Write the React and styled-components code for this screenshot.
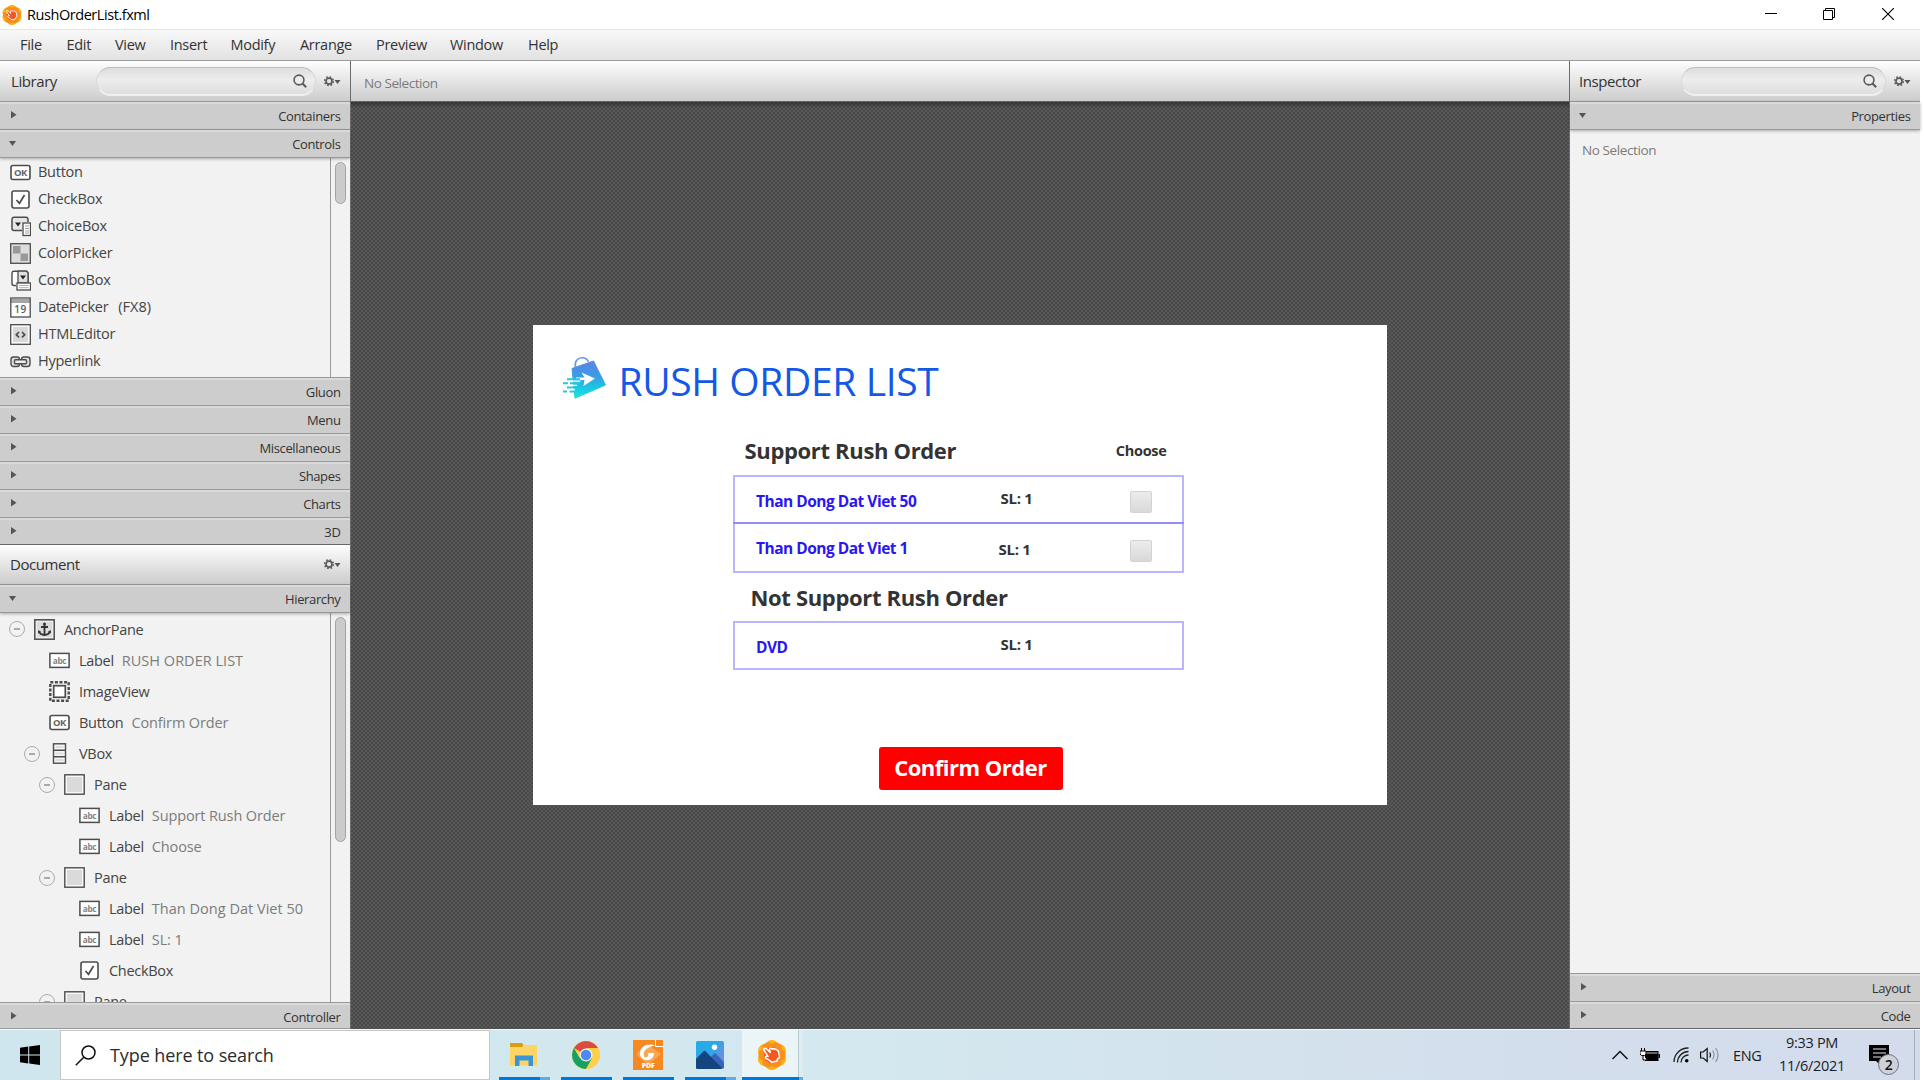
import React from "react";
import styled, { createGlobalStyle, css } from "styled-components";

const Global = createGlobalStyle`
  * { box-sizing: border-box; }
  body { margin: 0; background: #fff; overflow: hidden; }
  #root { font-family: "Open Sans", "Noto Sans", sans-serif; color: #333; }
  svg { display: block; flex: none; }
`;

const Screen = styled.div`
  width: 1920px;
  height: 1080px;
  display: flex;
  flex-direction: column;
  white-space: nowrap;
  font-size: 14.5px;
  letter-spacing: -0.3px;
`;

/* ---------- window chrome ---------- */
const TitleBar = styled.header`
  height: 29px;
  flex: none;
  display: flex;
  align-items: center;
  background: #fff;
  color: #000;
  padding-left: 2px;
`;
const FileName = styled.span`
  flex: 1;
  margin-left: 5px;
  letter-spacing: -0.44px;
`;
const WindowButton = styled.div`
  width: 58.5px;
  height: 29px;
  padding-bottom: 1px;
  display: flex;
  align-items: center;
  justify-content: center;
`;
const MenuBar = styled.nav`
  height: 32px;
  flex: none;
  display: flex;
  padding-left: 20px;
  border-top: 1px solid #e8e8e8;
  border-bottom: 1px solid #9b9b9b;
  background: linear-gradient(#f8f8f8, #e2e2e2);
`;
const MenuItem = styled.div`
  width: ${(p) => p.$width}px;
  line-height: 30px;
`;
const Workspace = styled.main`
  height: 968px;
  flex: none;
  display: flex;
`;

/* ---------- side panels ---------- */
const Side = styled.aside`
  width: 350px;
  height: 968px;
  flex: none;
  display: flex;
  flex-direction: column;
  background: #f2f2f2;
`;
const PanelHeader = styled.div`
  height: ${(p) => p.$height || 41}px;
  flex: none;
  display: flex;
  align-items: center;
  padding: 0 9px 0 ${(p) => p.$indent || 11}px;
  border-bottom: 1px solid #999;
  background: linear-gradient(#fefefe, #cccccc);
  font-size: 15px;
  letter-spacing: -0.42px;
`;
const PanelName = styled.span`
  width: ${(p) => p.$width}px;
  padding-bottom: ${(p) => p.$lift || 0}px;
`;
const SearchField = styled.div`
  width: ${(p) => p.$width}px;
  height: 29px;
  margin-right: 8px;
  padding-right: 8px;
  display: flex;
  align-items: center;
  justify-content: flex-end;
  border-radius: 15px;
  border: 1px solid #dadada;
  border-top-color: #bdbdbd;
  border-bottom: 2px solid #f0f0f0;
  background: linear-gradient(#dedede, #ededed 45%, #dedede);
`;
const Section = styled.div`
  height: ${(p) => p.$height || 28}px;
  flex: none;
  display: flex;
  align-items: flex-start;
  justify-content: space-between;
  padding: 0 9.5px 0 9px;
  background: #cdcdcd;
  border-top: 2px solid #dadada;
  border-bottom: 1px solid ${(p) => (p.$dark ? "#686868" : "#999")};
  font-size: 13px;
  letter-spacing: -0.36px;
  line-height: 25px;
  ${(p) => p.$open && css`box-shadow: 0 1px 3px rgba(0, 0, 0, 0.3); z-index: 1;`}
`;
const ArrowSlot = styled.span`
  padding-top: 7px;
`;
const ListArea = styled.div`
  height: ${(p) => p.$height}px;
  flex: none;
  display: flex;
  overflow: hidden;
  border-bottom: 1px solid #999;
`;
const ListBody = styled.div`
  width: 331px;
  flex: none;
  padding-top: 1px;
  border-right: 1px solid #999;
`;
const ScrollTrack = styled.div`
  flex: 1;
  padding: 4px 0 0 4px;
`;
const ScrollThumb = styled.div`
  width: 11px;
  height: ${(p) => p.$height}px;
  border: 1px solid #a3a3a3;
  border-radius: 5.5px;
  background: #cbcbcb;
`;
const LibraryRow = styled.div`
  height: 27px;
  display: flex;
  align-items: center;
  gap: 7px;
  padding-left: 10px;
  color: #444;
  letter-spacing: -0.26px;
`;
const LibraryName = styled.span`
  padding-bottom: 3px;
`;
const LibraryNote = styled.span`
  margin-left: 3px;
  padding-bottom: 3px;
  letter-spacing: 0;
`;
const TreeRow = styled.div`
  height: ${(p) => (p.$depth ? 31 : 30)}px;
  margin-bottom: ${(p) => (p.$depth ? 0 : 1)}px;
  display: flex;
  align-items: center;
  padding-left: ${(p) => 9 + p.$depth * 15}px;
  color: #444;
`;
const Toggle = styled.span`
  width: 16px;
  height: 16px;
  flex: none;
  margin-right: 9px;
  border: ${(p) => (p.$shown ? "1px solid #ababab" : "0")};
  border-radius: 50%;
  display: flex;
  align-items: center;
  justify-content: center;
  &::after {
    content: "";
    width: ${(p) => (p.$shown ? 6 : 0)}px;
    height: 2px;
    background: #aaa;
  }
`;
const TreeName = styled.span`
  margin-left: 9px;
`;
const TreeInfo = styled.span`
  margin-left: 8px;
  color: #7c7c7c;
  letter-spacing: ${(p) => (p.$wide ? 0.02 : -0.12)}px;
`;
const InspectorBody = styled.div`
  flex: 1;
  padding: 10px 12px;
  border-bottom: 1px solid #999;
  color: #7b7b7b;
  font-size: 13.5px;
  letter-spacing: -0.4px;
  line-height: 20px;
`;

/* ---------- editor canvas ---------- */
const Editor = styled.section`
  width: 1220px;
  display: flex;
  flex-direction: column;
  border-left: 1px solid #6c6c6c;
  border-right: 1px solid #6c6c6c;
`;
const SelectionBar = styled.div`
  height: 41px;
  flex: none;
  padding: 2px 0 0 13px;
  background: linear-gradient(#fefefe, #cccccc);
  border-bottom: 1px solid #666;
  color: #7b7b7b;
  font-size: 13.5px;
  letter-spacing: -0.44px;
  line-height: 40px;
`;
const Backdrop = styled.div`
  flex: 1;
  display: flex;
  align-items: center;
  justify-content: center;
  padding: 0 1px 2px 0;
  background: linear-gradient(rgba(0, 0, 0, 0.35), transparent 6px),
    conic-gradient(#585858 25%, #494949 0 50%, #585858 0 75%, #494949 0) 0 0 / 4px 4px;
`;
const AnchorPane = styled.div`
  width: 854px;
  height: 480px;
  background: #fff;
  padding-left: 29px;
`;
const Brand = styled.div`
  height: 110px;
  display: flex;
  padding-top: 31px;
`;
const BrandTitle = styled.h1`
  margin: 1px 0 0 11px;
  font-size: 39px;
  line-height: 48px;
  font-weight: 400;
  letter-spacing: -0.38px;
  color: #1458e6;
`;
const OrderBox = styled.div`
  width: 451px;
  margin-left: 171px;
`;
const GroupHead = styled.div`
  height: ${(p) => p.$height}px;
  display: flex;
  align-items: flex-start;
  padding: ${(p) => p.$top || 0}px 17px 0 ${(p) => p.$indent}px;
  font-weight: 700;
  line-height: 31px;
`;
const GroupTitle = styled.span`
  flex: 1;
  font-size: 22px;
  letter-spacing: -0.34px;
`;
const Choose = styled.span`
  font-size: 14.5px;
`;
const OrderRow = styled.div`
  height: ${(p) => p.$height}px;
  margin-top: ${(p) => (p.$joined ? -2 : 0)}px;
  display: grid;
  grid-template-columns: 244px 130px 22px;
  align-items: start;
  padding-left: 21px;
  border: 2px solid rgba(90, 80, 250, 0.42);
  font-weight: 700;
  font-size: 15px;
  line-height: 20px;
`;
const Product = styled.span`
  margin-top: ${(p) => p.$top}px;
  padding-left: 0.5px;
  font-size: 15.5px;
  letter-spacing: -0.5px;
  color: #2a16f2;
`;
const Quantity = styled.span`
  margin-top: ${(p) => p.$top}px;
  margin-left: ${(p) => p.$shift || 0}px;
`;
const CheckBox = styled.span`
  width: 22px;
  height: 22px;
  margin-top: ${(p) => p.$top}px;
  border: 1px solid #d3d3d3;
  border-radius: 2px;
  background: linear-gradient(#ececec, #d9d9d9);
`;
const ConfirmButton = styled.button`
  display: block;
  width: 184px;
  height: 43px;
  margin: 77px 0 0 317px;
  padding: 0 0 2px;
  border: 0;
  border-radius: 3px;
  background: #fe0000;
  color: #fff;
  font: 700 22px/41px "Open Sans", sans-serif;
  letter-spacing: -0.5px;
`;

/* ---------- taskbar ---------- */
const Taskbar = styled.footer`
  height: 51px;
  flex: none;
  display: flex;
  border-top: 1px solid #f4f8fa;
  background: linear-gradient(90deg, #d0e6ee, #d3e8ef 45%, #d3deec 80%, #d4dcec);
  color: #1c1c1c;
`;
const StartButton = styled.div`
  width: 60px;
  padding: 15px 0 0 20px;
`;
const TaskSearch = styled.div`
  width: 430px;
  display: flex;
  align-items: center;
  gap: 14px;
  padding-left: 14px;
  border: 1px solid #c7c7c7;
  background: #fff;
  font-size: 18px;
  letter-spacing: -0.1px;
  color: #2b2b2b;
`;
const Apps = styled.div`
  flex: 1;
  display: flex;
  gap: 11px;
  padding-left: 9px;
`;
const TaskApp = styled.div`
  width: 51px;
  display: flex;
  flex-direction: column;
  justify-content: space-between;
  padding-top: 10px;
  ${(p) =>
    p.$active &&
    css`
      width: 61px;
      margin-left: -5px;
      background: linear-gradient(90deg, #ebf4f7 56px, #b5c9d2 56px 57px, #dfedf3 57px);
    `}
`;
const AppIcon = styled.div`
  padding-left: ${(p) => (p.$active ? 15 : 10)}px;
`;
const Underline = styled.div`
  height: 3px;
  background: ${(p) =>
    p.$stack ? `linear-gradient(90deg, #0078d7 ${p.$stack}px, #66abe0 ${p.$stack}px)` : "#0078d7"};
`;
const Tray = styled.div`
  width: 308px;
  display: flex;
  align-items: center;
`;
const TraySlot = styled.div`
  width: ${(p) => p.$width}px;
  flex: none;
`;
const Clock = styled.div`
  width: 76px;
  text-align: center;
  line-height: 23px;
  padding-bottom: 3px;
`;
const Notice = styled.div`
  width: 64px;
  display: flex;
  justify-content: center;
  padding: 9px 0 0 4px;
`;
const DesktopPeek = styled.div`
  width: 6px;
  height: 50px;
  border-left: 1px solid #a5afba;
`;

/* ---------- icons ---------- */
const ink = "#4c4c4c";
const glyphs = {
  button: (
    <>
      <rect x="1" y="3.5" width="19" height="14" rx="2" fill="#fff" stroke={ink} strokeWidth="1.6" />
      <text x="10.5" y="14" textAnchor="middle" fontSize="9.500" fontWeight="700" letterSpacing="-.5" fill="#666">OK</text>
    </>
  ),
  check: (
    <>
      <rect x="2" y="2" width="17" height="17" rx="2" fill="#fff" stroke={ink} strokeWidth="1.6" />
      <path d="M6.500 11l3 3.300L14.500 6" fill="none" stroke={ink} strokeWidth="1.700" />
    </>
  ),
  choice: (
    <>
      <path d="M12 14.500H4A2 2 0 012 12.500V3A2 2 0 014 1.200H16A2 2 0 0118 3V6" fill="#e6e6e6" stroke={ink} strokeWidth="1.500" />
      <path d="M5 6.500h6l-3 4z" fill="#222" />
      <rect x="13" y="7" width="7.500" height="12.500" fill="#fff" stroke={ink} strokeWidth="1.300" />
      <path d="M15 10h4M15 12.500h4M15 15h4M15 17h4" stroke="#888" strokeWidth=".8" />
    </>
  ),
  color: (
    <>
      <rect x=".7" y=".7" width="19.600" height="19.600" fill="#dcdcdc" stroke={ink} strokeWidth="1.300" />
      <path d="M3 3h7.500v7.500H3zM10.500 10.500H18V18h-7.500z" fill="#999" />
    </>
  ),
  combo: (
    <>
      <path d="M6 15.500H4A2 2 0 012 13.500V3A2 2 0 014 1.200H16A2 2 0 0118 3V13" fill="#fff" stroke={ink} strokeWidth="1.400" />
      <path d="M8 1.200V13h10V3l-1.500-1.800z" fill="#e0e0e0" stroke={ink} strokeWidth="1.300" />
      <path d="M10 5.500h6l-3 4z" fill="#222" />
      <rect x="7" y="13" width="13.500" height="7" fill="#fff" stroke={ink} strokeWidth="1.300" />
      <path d="M9 15.500h9.500M9 17.700h9.500" stroke="#999" strokeWidth=".8" />
    </>
  ),
  date: (
    <>
      <rect x=".8" y="1" width="19.400" height="19" fill="#fff" stroke={ink} strokeWidth="1.300" />
      <path d="M1 3h19M1 5h19" stroke={ink} strokeWidth="1.200" />
      <text x="10.500" y="15.700" textAnchor="middle" fontSize="10" fontWeight="600" letterSpacing=".6" fill="#5c5c5c">19</text>
    </>
  ),
  html: (
    <>
      <rect x=".7" y=".7" width="19.600" height="19.600" fill="#fafafa" stroke={ink} strokeWidth="1.300" />
      <rect x="3" y="3" width="15" height="15" fill="#d8d8d8" />
      <path d="M9 8l-2.700 2.700L9 13.300M12 8l2.700 2.700L12 13.300" fill="none" stroke={ink} strokeWidth="1.700" />
    </>
  ),
  link: (
    <g fill="none" stroke={ink} strokeWidth="1.400">
      <rect x="1" y="6" width="8.500" height="9.500" rx="2.500" fill="#ddd" />
      <rect x="11.500" y="6" width="8.500" height="9.500" rx="2.500" fill="#ddd" />
      <rect x="4.500" y="8.700" width="12" height="4" rx="1" fill="#eee" />
    </g>
  ),
  anchor: (
    <>
      <rect x=".8" y=".8" width="19.400" height="19.400" fill="#eee" stroke={ink} strokeWidth="1.500" />
      <rect x="3" y="3" width="15" height="15" fill="#dcdcdc" />
      <path d="M10.500 5.500V16M7 8h7M5 12.300c.8 2.600 2.800 3.700 5.500 3.700s4.700-1.100 5.500-3.700" fill="none" stroke="#333" strokeWidth="1.800" />
      <circle cx="10.500" cy="4.900" r="1.500" fill="#333" />
      <path d="M4 14.300l.4-3.300 2.800 2zM17 14.300l-.4-3.300-2.800 2z" fill="#333" />
    </>
  ),
  label: (
    <>
      <rect x=".9" y="3.400" width="19.200" height="14" fill="#fff" stroke={ink} strokeWidth="1.500" />
      <text x="10.500" y="13.500" textAnchor="middle" fontSize="8.300" fontWeight="700" letterSpacing="-.3" fill="#858585">abc</text>
    </>
  ),
  image: (
    <>
      <rect x="1.300" y="1.300" width="18.400" height="18.400" fill="#f2f2f2" stroke={ink} strokeWidth="2.400" strokeDasharray="3 1.600" />
      <rect x="4.700" y="4.700" width="11.600" height="11.600" fill="#fff" stroke={ink} strokeWidth="1.700" />
    </>
  ),
  vbox: (
    <>
      <rect x="4.500" y=".8" width="12" height="19.400" fill="#f4f4f4" stroke={ink} strokeWidth="1.400" />
      <path d="M4 7.300h13M4 13.700h13" stroke={ink} strokeWidth="1.400" />
      <path d="M6.500 4h8M6.500 10.500h8M6.500 17h8" stroke="#ddd" strokeWidth="2" />
    </>
  ),
  pane: (
    <>
      <rect x=".8" y=".8" width="19.400" height="19.400" fill="#f8f8f8" stroke={ink} strokeWidth="1.400" />
      <rect x="3" y="3" width="15" height="15" fill="#dadada" />
    </>
  ),
};
const Glyph = ({ name }) => (
  <svg width="21" height="21" viewBox="0 0 21 21">{glyphs[name]}</svg>
);
const Arrow = ({ open }) => (
  <svg width="9" height="9" viewBox="0 0 9 9">
    <path d={open ? "M0 2h7L3.500 7z" : "M2 0v7.500L7.500 3.700z"} fill="#555" />
  </svg>
);
const Lens = () => (
  <svg width="14" height="14" viewBox="0 0 14 14" fill="none" stroke="#5a5a5a" strokeWidth="1.600">
    <circle cx="6" cy="6" r="4.900" />
    <path d="M9.500 9.500l3.700 3.700" strokeWidth="2" />
  </svg>
);
const Gear = () => (
  <svg width="17" height="11" viewBox="0 0 17 11">
    <circle cx="5" cy="5.200" r="3" fill="none" stroke="#5a5a5a" strokeWidth="1.700" />
    <circle cx="5" cy="5.200" r="4.400" fill="none" stroke="#5a5a5a" strokeWidth="1.400" strokeDasharray="1.730 1.730" />
    <path d="M10.500 4H16.500l-3 4z" fill="#555" />
  </svg>
);
const FlowerLogo = ({ size }) => (
  <svg width={size} height={size} viewBox="0 0 30 30">
    <g fill="#fdb515">
      {[0, 60, 120].map((a) => (
        <rect key={a} x="8.500" y="0" width="13" height="30" rx="6" transform={`rotate(${a} 15 15)`} />
      ))}
    </g>
    <g fill="#f7901e">
      {[30, 90, 150].map((a) => (
        <rect key={a} x="9.500" y="1.500" width="11" height="27" rx="5" transform={`rotate(${a} 15 15)`} />
      ))}
    </g>
    <circle cx="15" cy="15" r="8" fill="#f4581f" />
    <path d="M6.500 9.300c1-1.700 2.500-1 3.400 0l3.300 3.200-.7-3.200c.4-1.300 2-1.200 2.500 0 .6-1.200 2.200-1 2.600.3.800-1 2.300-.5 2.500.8l1.400.6 1 6.500-2 1.300-.5 2.200-5 1.300-2.200-1.700-4-2.500c-1-1.600.3-2.300 2.200-1.700z" fill="none" stroke="#fff" strokeWidth="1.500" strokeLinejoin="round" />
  </svg>
);
const BagLogo = () => (
  <svg width="46" height="44" viewBox="0 0 46 44">
    <defs>
      <linearGradient id="bag" x1="0" y1="0" x2="0" y2="1">
        <stop offset="0" stopColor="#5b84e4" />
        <stop offset=".4" stopColor="#3a9be6" />
        <stop offset=".7" stopColor="#1cc5e4" />
        <stop offset="1" stopColor="#18e6d6" />
      </linearGradient>
    </defs>
    <path d="M13.500 11C12 5 16 1.800 20 1.800c3.500 0 5.500 1.700 6.500 4" fill="none" stroke="#6d95ea" strokeWidth="1.600" />
    <path d="M10 12.500L31.500 5l12 24L13 42.200z" fill="url(#bag)" stroke="url(#bag)" strokeWidth="1" strokeLinejoin="round" />
    <path d="M19.500 16.500L33 22.500 21.500 30l1-6H14v-2.500h8.500z" fill="#fff" />
    <path d="M5 23.200h13M1 27.300h5M8 27.300h10M5 31.500h8M1 35.500h4M7.500 35.500h5" stroke="#23c8e2" strokeWidth="1.900" />
    <path d="M9.500 25.200h9M9 29.300h6M8 33.500h5" stroke="#fff" strokeWidth="1.300" />
  </svg>
);

/* ---------- data ---------- */
const menus = [["File", 46.5], ["Edit", 48.5], ["View", 55], ["Insert", 60.5], ["Modify", 69.5], ["Arrange", 76], ["Preview", 74], ["Window", 78], ["Help", 50]];
const controls = [["button", "Button"], ["check", "CheckBox"], ["choice", "ChoiceBox"], ["color", "ColorPicker"], ["combo", "ComboBox"], ["date", "DatePicker", "(FX8)"], ["html", "HTMLEditor"], ["link", "Hyperlink"]];
const closed = ["Gluon", "Menu", "Miscellaneous", "Shapes", "Charts", "3D"];
const tree = [
  [0, "anchor", "AnchorPane", "", true],
  [1, "label", "Label", "RUSH ORDER LIST"],
  [1, "image", "ImageView"],
  [1, "button", "Button", "Confirm Order"],
  [1, "vbox", "VBox", "", true],
  [2, "pane", "Pane", "", true],
  [3, "label", "Label", "Support Rush Order"],
  [3, "label", "Label", "Choose"],
  [2, "pane", "Pane", "", true],
  [3, "label", "Label", "Than Dong Dat Viet 50"],
  [3, "label", "Label", "SL: 1"],
  [3, "check", "CheckBox"],
  [2, "pane", "Pane", "", true],
];

const Fold = ({ name, open, ...rest }) => (
  <Section $open={open} {...rest}>
    <ArrowSlot><Arrow open={open} /></ArrowSlot>
    <span>{name}</span>
  </Section>
);

const LeftPanel = () => (
  <Side>
    <PanelHeader>
      <PanelName $width={85}>Library</PanelName>
      <SearchField $width={221}><Lens /></SearchField>
      <Gear />
    </PanelHeader>
    <Fold name="Containers" />
    <Fold name="Controls" open />
    <ListArea $height={220}>
      <ListBody>
        {controls.map(([icon, name, note]) => (
          <LibraryRow key={name}>
            <Glyph name={icon} />
            <LibraryName>{name}</LibraryName>
            {note && <LibraryNote>{note}</LibraryNote>}
          </LibraryRow>
        ))}
      </ListBody>
      <ScrollTrack><ScrollThumb $height={42} /></ScrollTrack>
    </ListArea>
    {closed.map((name) => (
      <Fold key={name} name={name} $height={name === "3D" ? 27 : 28} $dark={name === "3D"} />
    ))}
    <PanelHeader $height={40} $indent={10}>
      <PanelName $width={315} $lift={1}>Document</PanelName>
      <Gear />
    </PanelHeader>
    <Fold name="Hierarchy" open />
    <ListArea $height={390}>
      <ListBody>
        {tree.map(([depth, icon, name, info, toggle], i) => (
          <TreeRow key={i} $depth={depth}>
            <Toggle $shown={toggle} />
            <Glyph name={icon} />
            <TreeName>{name}</TreeName>
            {info && <TreeInfo $wide={info.startsWith("Than") || info.startsWith("RUSH")}>{info}</TreeInfo>}
          </TreeRow>
        ))}
      </ListBody>
      <ScrollTrack><ScrollThumb $height={225} /></ScrollTrack>
    </ListArea>
    <Fold name="Controller" $height={26} />
  </Side>
);

const Form = () => (
  <AnchorPane>
    <Brand>
      <BagLogo />
      <BrandTitle>RUSH ORDER LIST</BrandTitle>
    </Brand>
    <OrderBox>
      <GroupHead $height={40} $indent={12}>
        <GroupTitle>Support Rush Order</GroupTitle>
        <Choose>Choose</Choose>
      </GroupHead>
      <OrderRow $height={49}>
        <Product $top={14}>Than Dong Dat Viet 50</Product>
        <Quantity $top={11} $shift={1}>SL: 1</Quantity>
        <CheckBox $top={14} />
      </OrderRow>
      <OrderRow $height={51} $joined>
        <Product $top={14}>Than Dong Dat Viet 1</Product>
        <Quantity $top={15} $shift={-1}>SL: 1</Quantity>
        <CheckBox $top={16} />
      </OrderRow>
      <GroupHead $height={48} $indent={18} $top={9}>
        <GroupTitle>Not Support Rush Order</GroupTitle>
      </GroupHead>
      <OrderRow $height={49}>
        <Product $top={14}>DVD</Product>
        <Quantity $top={11} $shift={1}>SL: 1</Quantity>
      </OrderRow>
    </OrderBox>
    <ConfirmButton>Confirm Order</ConfirmButton>
  </AnchorPane>
);

const FolderIcon = () => (
  <svg width="30" height="30" viewBox="0 0 30 30">
    <path d="M1 3h12l1.500 2-1.500 3H1z" fill="#dd9c0c" />
    <path d="M1 7h12l2-2h13v20.500H1z" fill="#fdd565" />
    <path d="M6 26V15.500h18V26h-4.500v-5.500h-9V26z" fill="#3a95d8" />
  </svg>
);
const ChromeIcon = () => (
  <svg width="30" height="30" viewBox="0 0 30 30">
    <circle cx="15" cy="15" r="14" fill="#fecf48" />
    <path d="M15 15L2.900 8A14 14 0 0127.100 8H15z" fill="#dc4b40" />
    <path d="M2.900 8A14 14 0 0015 29l6-10.500L15 15 9 18.500z" fill="#18a05e" />
    <path d="M15 29a14 14 0 0012.100-21H15l6 10.500z" fill="#fecf48" />
    <circle cx="15" cy="15" r="6.500" fill="#f3f3f3" />
    <circle cx="15" cy="15" r="5.200" fill="#4d88f4" />
  </svg>
);
const PdfIcon = () => (
  <svg width="30" height="30" viewBox="0 0 30 30">
    <rect width="30" height="30" fill="#f6891f" />
    <path d="M3 14L14 4l14 10-13 11z" fill="#f9a655" />
    <path d="M22.500 0v6.500H30" fill="#f6891f" stroke="#fff" strokeWidth="1" />
    <path d="M22 5.500C16 3 7 5.500 7 13.500c0 8.500 13.500 9.500 14.200-.5h-6.500c1 1.200.5 4.500-1.700 4.500-1.800 0-2.600-1.800-2.300-4C11.300 9 16 7 22 5.500z" fill="#fff" />
    <text x="15.200" y="28" textAnchor="middle" fontSize="7" fontWeight="800" letterSpacing="-.1" fill="#fff">PDF</text>
  </svg>
);
const PhotosIcon = () => (
  <svg width="30" height="30" viewBox="0 0 30 30">
    <defs>
      <linearGradient id="sky" x2="1" y2=".7"><stop offset=".5" stopColor="#27aae8" /><stop offset="1" stopColor="#7f86de" /></linearGradient>
    </defs>
    <rect x="1" y="1" width="28" height="28" rx="1.500" fill="url(#sky)" />
    <path d="M14 19l5-5.200q1-.9 2 0l8 8.500V28H14z" fill="#3566bb" />
    <path d="M1 19L8.500 11.300q1-.9 2 0L27 28q-.5 1-1.500 1H2.500Q1 29 1 27.500z" fill="#15457f" />
    <circle cx="19.500" cy="7.300" r="2.700" fill="#fff" />
  </svg>
);

const apps = [[FolderIcon, 41], [ChromeIcon], [PdfIcon], [PhotosIcon, 41]];

export default function App() {
  return (
    <Screen>
      <Global />
      <TitleBar>
        <FlowerLogo size={20} />
        <FileName>RushOrderList.fxml</FileName>
        <WindowButton>
          <svg width="12" height="12"><path d="M0 5.500h12" stroke="#000" /></svg>
        </WindowButton>
        <WindowButton>
          <svg width="12" height="12" fill="none" stroke="#000"><path d="M.5 2.500h9v9h-9zM2.500 2.500v-2h9v9h-2" /></svg>
        </WindowButton>
        <WindowButton>
          <svg width="12" height="12" stroke="#000" strokeWidth="1.100"><path d="M0 0l12 12M12 0L0 12" /></svg>
        </WindowButton>
        <TraySlot $width={3} />
      </TitleBar>
      <MenuBar>
        {menus.map(([name, width]) => <MenuItem key={name} $width={width}>{name}</MenuItem>)}
      </MenuBar>
      <Workspace>
        <LeftPanel />
        <Editor>
          <SelectionBar>No Selection</SelectionBar>
          <Backdrop><Form /></Backdrop>
        </Editor>
        <Side>
          <PanelHeader $indent={9}>
            <PanelName $width={102}>Inspector</PanelName>
            <SearchField $width={206}><Lens /></SearchField>
            <Gear />
          </PanelHeader>
          <Fold name="Properties" open />
          <InspectorBody>No Selection</InspectorBody>
          <Fold name="Layout" />
          <Fold name="Code" $height={27} $dark />
        </Side>
      </Workspace>
      <Taskbar>
        <StartButton>
          <svg width="20" height="20" viewBox="0 0 20 20"><path d="M0 2.800l8.200-1.200v7.900H0zM9.200 1.400L20 0v9.500H9.200zM0 10.500h8.200v7.900L0 17.200zM9.200 10.500H20V20L9.200 18.600z" /></svg>
        </StartButton>
        <TaskSearch>
          <svg width="21" height="21" fill="none" stroke="#111" strokeWidth="1.500"><circle cx="13.500" cy="7.500" r="6.500" /><path d="M9 12L.8 20.200" /></svg>
          <span>Type here to search</span>
        </TaskSearch>
        <Apps>
          {apps.map(([Icon, stack], i) => (
            <TaskApp key={i}><AppIcon><Icon /></AppIcon><Underline $stack={stack} /></TaskApp>
          ))}
          <TaskApp $active><AppIcon $active><FlowerLogo size={30} /></AppIcon><Underline $stack={57} /></TaskApp>
        </Apps>
        <Tray>
          <TraySlot $width={28}>
            <svg width="16" height="10" fill="none" stroke="#111" strokeWidth="1.500"><path d="M.5 9L8 1.500 15.500 9" /></svg>
          </TraySlot>
          <TraySlot $width={33}>
            <svg width="20" height="14" viewBox="0 0 20 14">
              <rect x="5.500" y="3.500" width="12.500" height="9" fill="#000" stroke="#000" />
              <path d="M6 5h11.500" stroke="#fff" strokeWidth=".8" />
              <rect x="18.500" y="6" width="1.500" height="4" />
              <path d="M1.500 0v3M4.500 0v3M0 3h6v3l-1.500 1.500h-3L0 6zM3 7v5h4" fill="#fff" stroke="#000" strokeWidth="1" />
            </svg>
          </TraySlot>
          <TraySlot $width={27}>
            <svg width="16" height="16" viewBox="0 0 16 16" fill="none" stroke="#222" strokeWidth="1.300">
              <path d="M1 15A14 14 0 0115.500 1M4.500 15.500A11 11 0 0115.500 4.500M8 15.500A7.500 7.500 0 0115.500 8" />
              <circle cx="13.700" cy="13.700" r="1.800" fill="#000" stroke="none" />
            </svg>
          </TraySlot>
          <TraySlot $width={33}>
            <svg width="20" height="16" viewBox="0 0 20 16" fill="none" stroke="#111" strokeWidth="1.200">
              <path d="M.6 5h2.600l4-3.500v13l-4-3.500H.6zM9.800 5.500q1.500 2.500 0 5" />
              <path d="M12.600 3.500q3 4.500 0 9M15.600 1q5 7 0 14" stroke="#8c959e" />
            </svg>
          </TraySlot>
          <TraySlot $width={41}>ENG</TraySlot>
          <Clock>9:33 PM<br />11/6/2021</Clock>
          <Notice>
            <svg width="30" height="32" viewBox="0 0 30 32">
              <path d="M0 1h20v16h-9v4l-4-4H0z" fill="#000" />
              <path d="M4 5h13M4 9h13M4 13h8" stroke="#dfe5ee" strokeWidth="1.100" />
              <circle cx="19.500" cy="20.500" r="10" fill="#cdd1d8" stroke="#6f7379" />
              <text x="19.500" y="25.500" textAnchor="middle" fontSize="14" fontWeight="600" fill="#111">2</text>
            </svg>
          </Notice>
          <DesktopPeek />
        </Tray>
      </Taskbar>
    </Screen>
  );
}
